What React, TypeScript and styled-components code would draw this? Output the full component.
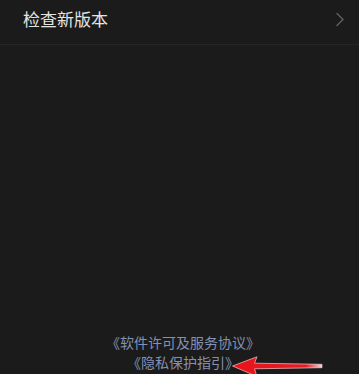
import styled, { createGlobalStyle } from "styled-components";

const GlobalStyle = createGlobalStyle`
  * {
    box-sizing: border-box;
  }

  html, body {
    margin: 0;
    padding: 0;
    background: #1b1b1b;
    font-family: "Noto Sans CJK SC", "Noto Sans", sans-serif;
  }
`;

const App = () => {
  return (
    <>
      <GlobalStyle />
      <Page>
        {/* 设置项 */}
        <SettingRow>
          <RowLabel>检查新版本</RowLabel>
          <Chevron>
            <svg width="10" height="15" viewBox="0 0 10 15">
              <path
                d="M2 1.5 L8 7.5 L2 13.5"
                fill="none"
                stroke="#5e5e5e"
                strokeWidth="1.5"
                strokeLinecap="round"
                strokeLinejoin="round"
              />
            </svg>
          </Chevron>
        </SettingRow>

        <Spacer />

        {/* 底部协议链接 */}
        <Footer>
          <LinkLine>《软件许可及服务协议》</LinkLine>
          <LinkLine>
            <Marked>
              《隐私保护指引》
              <Arrow>
                <svg width="92" height="22" viewBox="0 0 92 22">
                  <defs>
                    <linearGradient id="shaft" x1="0" x2="1" y1="0" y2="0">
                      <stop offset="0" stopColor="#ea121a" />
                      <stop offset="0.82" stopColor="#e31b24" />
                      <stop offset="1" stopColor="#f2dadb" />
                    </linearGradient>
                  </defs>
                  <path
                    d="M0.5 10 L25 0.8 L22.5 7.2 L90 8.3 L90 11.7 L22.5 12.8 L25 20.5 Z"
                    fill="url(#shaft)"
                    stroke="#f6c8ca"
                    strokeWidth="0.7"
                    strokeLinejoin="round"
                  />
                </svg>
              </Arrow>
            </Marked>
          </LinkLine>
        </Footer>
      </Page>
    </>
  );
};

export default App;

const Page = styled.div`
  width: 100%;
  height: 374px;
  background: #1b1b1b;
  display: flex;
  flex-direction: column;
  overflow: hidden;
`;

const SettingRow = styled.div`
  height: 45px;
  padding: 0 14px 7px 23px;
  display: flex;
  align-items: center;
  justify-content: space-between;
  border-bottom: 1px solid #252525;
`;

const RowLabel = styled.span`
  font-size: 17px;
  font-weight: 400;
  color: #e4e4e4;
`;

const Chevron = styled.span`
  display: flex;
  align-items: center;
  padding-top: 1px;
`;

const Spacer = styled.div`
  flex: 1;
`;

const Footer = styled.div`
  display: flex;
  flex-direction: column;
  align-items: center;
  padding: 0 0 2px 7px;
`;

const LinkLine = styled.div`
  font-size: 14px;
  line-height: 20px;
  color: #8391b3;
  white-space: nowrap;
`;

const Marked = styled.span`
  position: relative;
`;

const Arrow = styled.span`
  position: absolute;
  left: calc(100% - 7px);
  top: 4px;
  display: block;
  line-height: 0;
`;
